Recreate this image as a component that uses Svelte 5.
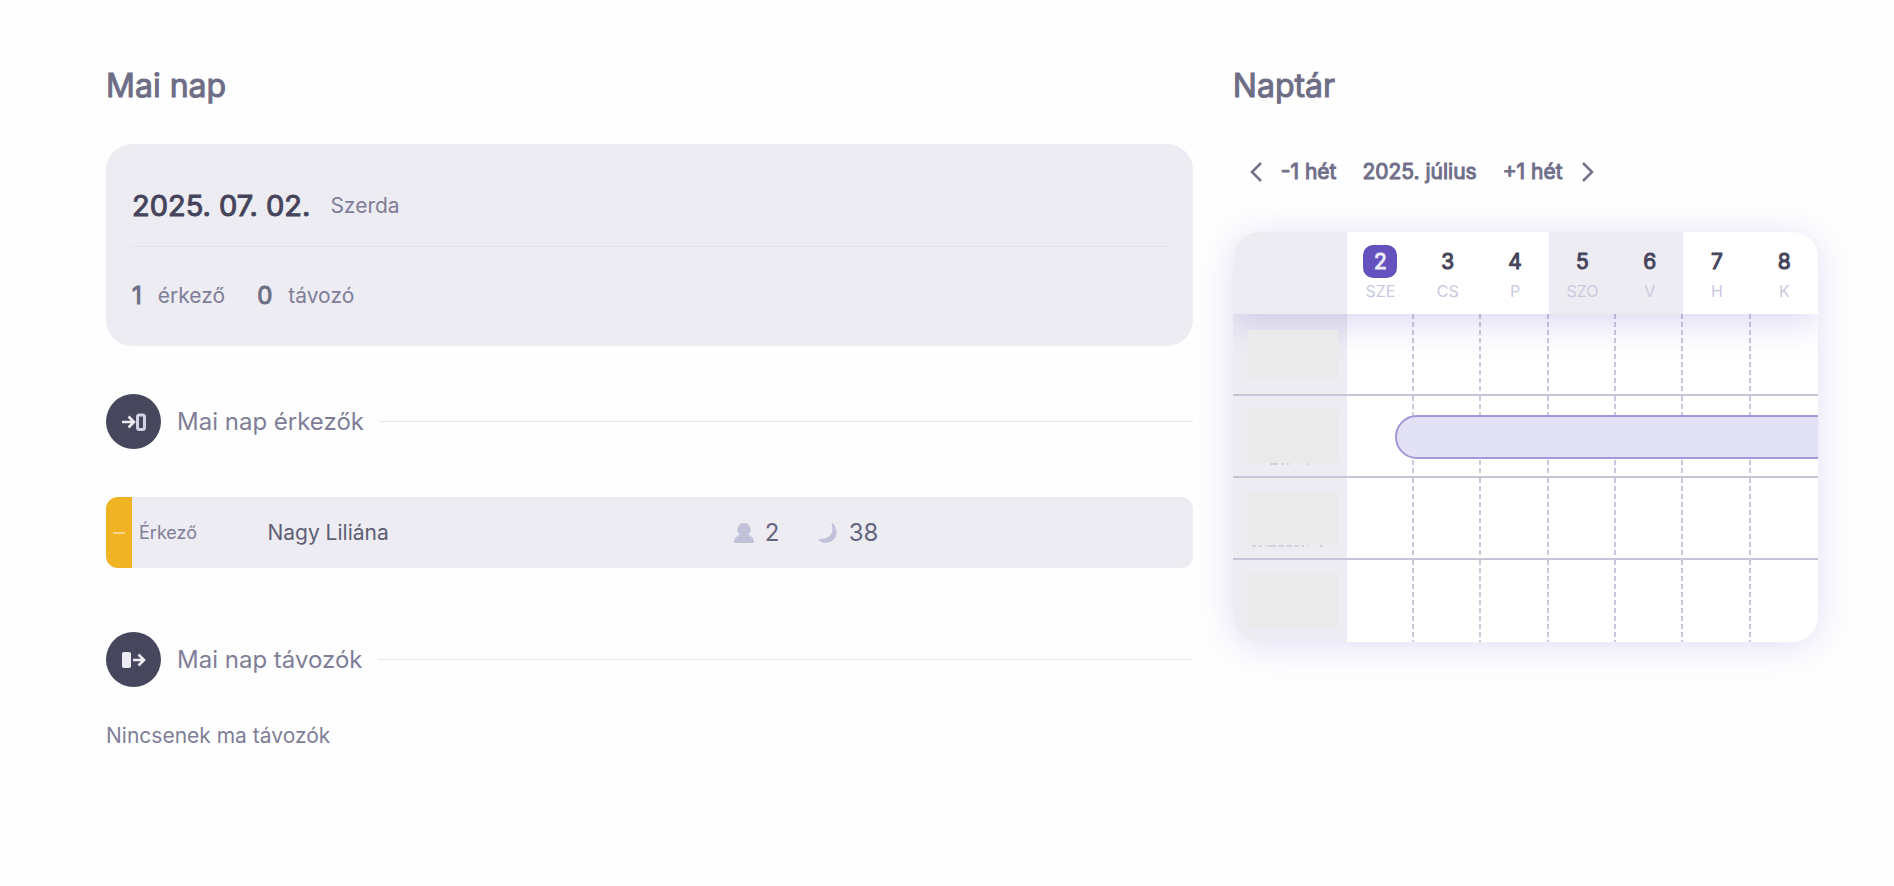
<script lang="ts">
	const today = {
		date: '2025. 07. 02.',
		weekday: 'Szerda',
		arriving: 1,
		leaving: 0
	};

	const arrivals = [{ status: 'Érkező', name: 'Nagy Liliána', guests: 2, nights: 38 }];
	const departures: typeof arrivals = [];

	const days = [
		{ day: 2, label: 'SZE', today: true },
		{ day: 3, label: 'CS' },
		{ day: 4, label: 'P' },
		{ day: 5, label: 'SZO', weekend: true },
		{ day: 6, label: 'V', weekend: true },
		{ day: 7, label: 'H' },
		{ day: 8, label: 'K' }
	];

	// start and length are counted in days from the first visible column
	// trace: what stays visible of the room name under its cover
	const rooms = [
		{ id: 1, booking: null, trace: '' },
		{ id: 2, booking: { start: 0.72, length: 7 }, trace: 'M23 1h8m3 0h3m3 0h2m18 0h2' },
		{ id: 3, booking: null, trace: 'M5 1h4m3 0h3m3 0h1m2 0h8m2 0h6m2 0h6m2 0h5m3 0h2m3 0h1m12 0h3' },
		{ id: 4, booking: null, trace: '' }
	];
</script>

{#snippet guestRow(guest)}
	<li class="guest">
		<button class="toggle" aria-label="Részletek"><span></span></button>
		<span class="status">{guest.status}</span>
		<span class="name">{guest.name}</span>
		<span class="count">
			<svg width="20" height="20" viewBox="0 0 20 20" aria-hidden="true">
				<path d="M10 0a6.6 6.6 0 0 1 4 11.8c3 .8 5.200 3 6 6.400q.2 1.800-1.200 1.800H1.200Q-.2 20 0 18.200c.8-3.400 3-5.600 6-6.400A6.600 6.600 0 0 1 10 0Z" />
			</svg>
			{guest.guests}
		</span>
		<span class="count">
			<svg width="20" height="20" viewBox="0 0 20 20" aria-hidden="true">
				<path d="M13.500.6c-.3-.8.700-1 1.200-.3C17 2.600 18.600 5.500 18.600 9c0 6-4.800 10.800-10.600 10.800-2.700 0-5-.8-6.800-2.300-.7-.7-.3-1.600.6-1.600C9 16.300 14.400 12.500 14.400 6c0-2-.3-3.800-.9-5.400Z" />
			</svg>
			{guest.nights}
		</span>
	</li>
{/snippet}

<main class="page">
	<section>
		<h1>Mai nap</h1>

		<div class="summary">
			<div class="date">
				<strong>{today.date}</strong>
				<span>{today.weekday}</span>
			</div>
			<div class="stats">
				<span><b>{today.arriving}</b>érkező</span>
				<span><b>{today.leaving}</b>távozó</span>
			</div>
		</div>

		<div class="heading">
			<span class="icon">
				<svg width="24" height="18" viewBox="0 0 24 18" fill="none" aria-hidden="true">
					<path d="M0 9h11M6.500 3.500 12 9l-5.500 5.500" stroke="#edecf2" stroke-width="2.600" />
					<rect x="15.500" y="2" width="7" height="14.500" rx="2" stroke="#d3d2e4" stroke-width="3" />
				</svg>
			</span>
			<h2>Mai nap érkezők</h2>
		</div>
		<ul>
			{#each arrivals as guest}
				{@render guestRow(guest)}
			{/each}
		</ul>

		<div class="heading">
			<span class="icon">
				<svg width="24" height="18" viewBox="0 0 24 18" fill="none" aria-hidden="true">
					<rect x="0" y="1" width="9" height="16" rx="2" fill="#edecf2" />
					<path d="M11 9h11M16.500 3.500 22 9l-5.500 5.500" stroke="#edecf2" stroke-width="2.600" />
				</svg>
			</span>
			<h2>Mai nap távozók</h2>
		</div>
		{#if departures.length}
			<ul>
				{#each departures as guest}
					{@render guestRow(guest)}
				{/each}
			</ul>
		{:else}
			<p class="empty">Nincsenek ma távozók</p>
		{/if}
	</section>

	<section>
		<h1>Naptár</h1>

		<nav>
			<button>
				<svg width="14" height="20" viewBox="0 0 14 20" aria-hidden="true">
					<path d="M12 1 3 10l9 9" />
				</svg>
				-1 hét
			</button>
			<span>2025. július</span>
			<button>
				+1 hét
				<svg width="14" height="20" viewBox="0 0 14 20" aria-hidden="true">
					<path d="m2 1 9 9-9 9" />
				</svg>
			</button>
		</nav>

		<div class="calendar">
			<table>
				<thead>
					<tr>
						<td class="room"></td>
						{#each days as day}
							<th scope="col" class:weekend={day.weekend}>
								<span class="day" class:today={day.today}>{day.day}</span>
								<span class="label">{day.label}</span>
							</th>
						{/each}
					</tr>
				</thead>
				<tbody>
					{#each rooms as room (room.id)}
						<tr>
							<td class="room">
								<div class="cover">
									{#if room.trace}
										<svg width="91" height="2" viewBox="0 0 91 2" aria-hidden="true">
											<path d={room.trace} />
										</svg>
									{/if}
								</div>
							</td>
							{#each days as day, i}
								<td>
									{#if room.booking && Math.floor(room.booking.start) === i}
										<div
											class="booking"
											style="left: {(room.booking.start - i) * 100}%; width: {room.booking.length * 100}%"
										></div>
									{/if}
								</td>
							{/each}
						</tr>
					{/each}
				</tbody>
			</table>
		</div>
	</section>
</main>

<style>
	:global(body) {
		margin: 0;
		background: #fefefe;
	}
	.page {
		display: grid;
		grid-template-columns: 13fr 7fr;
		gap: 40px;
		padding: 64px 76px 64px 106px;
		font-family: Inter, sans-serif;
		font-size: 21px;
		line-height: 28px;
		color: #7f7e98;
	}
	h1,
	h2,
	p,
	ul {
		margin: 0;
		padding: 0;
	}
	/* regular cut thickened with a stroke, keeps the narrow letter widths */
	h1,
	nav,
	.date strong,
	.stats b,
	.day {
		font-weight: 400;
		-webkit-text-stroke: 1px currentColor;
	}
	h1 {
		font-size: 32px;
		line-height: 44px;
		color: #6e6d86;
	}
	button {
		border: 0;
		padding: 0;
		background: none;
		font: inherit;
		color: inherit;
		cursor: pointer;
	}

	.summary {
		margin-top: 36px;
		padding: 44px 26px 36px;
		border-radius: 26px;
		background: #edecf2;
	}
	.date {
		display: flex;
		align-items: center;
		gap: 20px;
		padding-bottom: 22px;
		border-bottom: 1px solid #e1e0ef;
	}
	.date strong {
		font-size: 29px;
		line-height: 36px;
		color: #45445b;
	}
	.stats {
		display: flex;
		gap: 32px;
		padding-top: 35px;
	}
	.stats span {
		display: flex;
		align-items: center;
		gap: 16px;
	}
	.stats b {
		font-size: 24px;
		color: #6e6d86;
	}

	.heading {
		display: flex;
		align-items: center;
		gap: 16px;
		margin-top: 48px;
	}
	.heading::after {
		content: '';
		flex: 1;
		height: 1px;
		background: #e6e4ee;
	}
	.icon {
		display: grid;
		place-items: center;
		width: 55px;
		height: 55px;
		border-radius: 50%;
		background: #46465c;
	}
	h2 {
		font-size: 24px;
		font-weight: 400;
	}
	ul {
		margin: 48px 0 64px;
		list-style: none;
	}
	.guest {
		display: grid;
		grid-template-columns: 26px 12% 43% 84px 1fr;
		align-items: center;
		height: 71px;
		border-radius: 12px;
		background: #edecf2;
		overflow: hidden;
	}
	.toggle {
		display: grid;
		place-items: center;
		height: 100%;
		background: #f0b323;
	}
	.toggle span {
		width: 12px;
		height: 2px;
		background: #f6d488;
	}
	.status {
		padding-left: 7px;
		font-size: 18px;
	}
	.name {
		padding-left: 5px;
		color: #5f5e76;
	}
	.count {
		display: flex;
		align-items: center;
		gap: 11px;
		padding-left: 4px;
		font-size: 24px;
		color: #65647d;
	}
	.count svg {
		fill: #c2c1da;
	}
	.empty {
		margin-top: 35px;
	}

	nav {
		display: flex;
		align-items: center;
		gap: 26px;
		margin: 50px 16px 46px;
		color: #716f8a;
	}
	nav button {
		display: flex;
		align-items: center;
		gap: 18px;
	}
	nav path {
		fill: none;
		stroke: currentColor;
		stroke-width: 2.5;
	}

	.calendar {
		border-radius: 26px;
		box-shadow: 0 4px 36px rgba(100, 80, 210, 0.18);
		background: #fff;
		overflow: hidden;
	}
	table {
		width: 100%;
		border-spacing: 0;
		table-layout: fixed;
	}
	td,
	th {
		padding: 0;
		box-sizing: border-box;
	}
	.room {
		width: 114px;
		background: #edecf2;
	}
	thead {
		position: relative;
		z-index: 1;
		background: #fff;
		box-shadow: 0 8px 36px rgba(100, 80, 200, 0.24);
	}
	th {
		height: 82px;
	}
	.weekend {
		background: #edecf2;
	}
	.day {
		display: block;
		width: 34px;
		margin: 0 auto;
		border-radius: 10px;
		line-height: 33px;
		color: #45445b;
	}
	.today {
		background: #6652be;
		color: #edecf8;
	}
	.label {
		display: block;
		padding-top: 2px;
		font-size: 16px;
		font-weight: 400;
		line-height: 22px;
		color: #cac9e0;
	}
	tbody td {
		position: relative;
		height: 82px;
		border-bottom: 2px solid #c6c4d8;
		background: repeating-linear-gradient(#cac8dc 0 5px, transparent 5px 8px) right / 2px 100% no-repeat;
	}
	tbody td:last-child {
		background: none;
	}
	tbody .room {
		background: #edecf2;
	}
	tbody tr:last-child td {
		border-bottom: 0;
	}
	.cover {
		position: relative;
		z-index: 2;
		height: 54px;
		margin: 0 9px 0 14px;
		background: #eaeaea;
	}
	.cover svg {
		position: absolute;
		top: 100%;
		left: 0;
	}
	.cover path {
		stroke: #bab9c9;
		stroke-width: 1;
	}
	tbody tr:first-child .cover {
		height: 48px;
	}
	.booking {
		position: absolute;
		z-index: 1;
		top: 19px;
		box-sizing: border-box;
		height: 44px;
		border: 2px solid #a398d8;
		border-radius: 22px;
		background: #e3e1f4;
	}
</style>
